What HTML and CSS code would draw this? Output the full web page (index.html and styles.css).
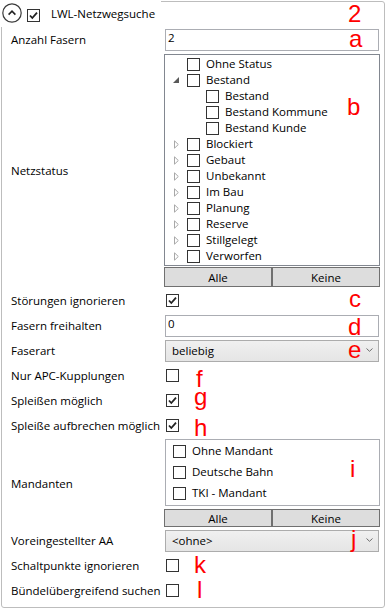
FILE: index.html
```html
<!DOCTYPE html>
<html lang="de">
<head>
    <meta charset="UTF-8">
    <meta name="viewport" content="width=device-width, initial-scale=1.0">
    <title>LWL-Netzwegsuche</title>
    <link rel="stylesheet" href="styles.css">
</head>
<body>
    <div class="panel">
        <div class="panel-header">
            <span class="expander">
                <svg width="20" height="20" viewBox="0 0 20 20"><circle cx="10" cy="10" r="9.2" fill="#fff" stroke="#3a3a3a" stroke-width="1.2"/><polyline points="6.6,11.6 10,8.2 13.4,11.6" fill="none" stroke="#222" stroke-width="1.6"/></svg>
            </span>
            <span class="check checked"><svg width="11" height="11" viewBox="0 0 11 11"><polyline points="2,5.5 4.3,8 9,2.6" fill="none" stroke="#222" stroke-width="1.8"/></svg></span>
            <span class="panel-title">LWL-Netzwegsuche</span>
        </div>

        <div class="field">
            <label class="field-label">Anzahl Fasern</label>
            <div class="field-value"><input class="textbox" type="text" value="2"></div>
        </div>

        <div class="field field-tree">
            <label class="field-label">Netzstatus</label>
            <div class="field-value stack">
                <ul class="tree">
                    <li class="tree-row"><span class="tree-toggle"></span><span class="check"></span><span class="tree-text">Ohne Status</span></li>
                    <li class="tree-row"><span class="tree-toggle"><svg width="6" height="6" viewBox="0 0 6 6"><path d="M6 0 L6 6 L0 6 Z" fill="#595959"/></svg></span><span class="check"></span><span class="tree-text">Bestand</span></li>
                    <li class="tree-row tree-child"><span class="tree-toggle"></span><span class="check"></span><span class="tree-text">Bestand</span></li>
                    <li class="tree-row tree-child"><span class="tree-toggle"></span><span class="check"></span><span class="tree-text">Bestand Kommune</span></li>
                    <li class="tree-row tree-child"><span class="tree-toggle"></span><span class="check"></span><span class="tree-text">Bestand Kunde</span></li>
                    <li class="tree-row"><span class="tree-toggle closed"><svg width="5" height="9" viewBox="0 0 5 9"><path d="M0.5 0.8 L4.3 4.5 L0.5 8.2 Z" fill="none" stroke="#a8a8a8"/></svg></span><span class="check"></span><span class="tree-text">Blockiert</span></li>
                    <li class="tree-row"><span class="tree-toggle closed"><svg width="5" height="9" viewBox="0 0 5 9"><path d="M0.5 0.8 L4.3 4.5 L0.5 8.2 Z" fill="none" stroke="#a8a8a8"/></svg></span><span class="check"></span><span class="tree-text">Gebaut</span></li>
                    <li class="tree-row"><span class="tree-toggle closed"><svg width="5" height="9" viewBox="0 0 5 9"><path d="M0.5 0.8 L4.3 4.5 L0.5 8.2 Z" fill="none" stroke="#a8a8a8"/></svg></span><span class="check"></span><span class="tree-text">Unbekannt</span></li>
                    <li class="tree-row"><span class="tree-toggle closed"><svg width="5" height="9" viewBox="0 0 5 9"><path d="M0.5 0.8 L4.3 4.5 L0.5 8.2 Z" fill="none" stroke="#a8a8a8"/></svg></span><span class="check"></span><span class="tree-text">Im Bau</span></li>
                    <li class="tree-row"><span class="tree-toggle closed"><svg width="5" height="9" viewBox="0 0 5 9"><path d="M0.5 0.8 L4.3 4.5 L0.5 8.2 Z" fill="none" stroke="#a8a8a8"/></svg></span><span class="check"></span><span class="tree-text">Planung</span></li>
                    <li class="tree-row"><span class="tree-toggle closed"><svg width="5" height="9" viewBox="0 0 5 9"><path d="M0.5 0.8 L4.3 4.5 L0.5 8.2 Z" fill="none" stroke="#a8a8a8"/></svg></span><span class="check"></span><span class="tree-text">Reserve</span></li>
                    <li class="tree-row"><span class="tree-toggle closed"><svg width="5" height="9" viewBox="0 0 5 9"><path d="M0.5 0.8 L4.3 4.5 L0.5 8.2 Z" fill="none" stroke="#a8a8a8"/></svg></span><span class="check"></span><span class="tree-text">Stillgelegt</span></li>
                    <li class="tree-row"><span class="tree-toggle closed"><svg width="5" height="9" viewBox="0 0 5 9"><path d="M0.5 0.8 L4.3 4.5 L0.5 8.2 Z" fill="none" stroke="#a8a8a8"/></svg></span><span class="check"></span><span class="tree-text">Verworfen</span></li>
                </ul>
                <div class="button-pair tree-buttons"><button>Alle</button><button>Keine</button></div>
            </div>
        </div>

        <div class="field">
            <label class="field-label">Störungen ignorieren</label>
            <div class="field-value"><span class="check checked"><svg width="11" height="11" viewBox="0 0 11 11"><polyline points="2,5.5 4.3,8 9,2.6" fill="none" stroke="#222" stroke-width="1.8"/></svg></span></div>
        </div>

        <div class="field">
            <label class="field-label">Fasern freihalten</label>
            <div class="field-value"><input class="textbox" type="text" value="0"></div>
        </div>

        <div class="field">
            <label class="field-label">Faserart</label>
            <div class="field-value">
                <div class="combo"><span>beliebig</span><svg width="7" height="4" viewBox="0 0 7 4"><polyline points="0.5,0.5 3.5,3.3 6.5,0.5" fill="none" stroke="#6d6d6d"/></svg></div>
            </div>
        </div>

        <div class="field">
            <label class="field-label">Nur APC-Kupplungen</label>
            <div class="field-value"><span class="check"></span></div>
        </div>

        <div class="field">
            <label class="field-label">Spleißen möglich</label>
            <div class="field-value"><span class="check checked"><svg width="11" height="11" viewBox="0 0 11 11"><polyline points="2,5.5 4.3,8 9,2.6" fill="none" stroke="#222" stroke-width="1.8"/></svg></span></div>
        </div>

        <div class="field">
            <label class="field-label">Spleiße aufbrechen möglich</label>
            <div class="field-value"><span class="check checked"><svg width="11" height="11" viewBox="0 0 11 11"><polyline points="2,5.5 4.3,8 9,2.6" fill="none" stroke="#222" stroke-width="1.8"/></svg></span></div>
        </div>

        <div class="field field-list">
            <label class="field-label">Mandanten</label>
            <div class="field-value stack">
                <ul class="listbox">
                    <li class="list-row"><span class="check"></span><span class="list-text">Ohne Mandant</span></li>
                    <li class="list-row"><span class="check"></span><span class="list-text">Deutsche Bahn</span></li>
                    <li class="list-row"><span class="check"></span><span class="list-text">TKI - Mandant</span></li>
                </ul>
                <div class="button-pair list-buttons"><button>Alle</button><button>Keine</button></div>
            </div>
        </div>

        <div class="field">
            <label class="field-label">Voreingestellter AA</label>
            <div class="field-value">
                <div class="combo"><span>&lt;ohne&gt;</span><svg width="7" height="4" viewBox="0 0 7 4"><polyline points="0.5,0.5 3.5,3.3 6.5,0.5" fill="none" stroke="#6d6d6d"/></svg></div>
            </div>
        </div>

        <div class="field">
            <label class="field-label">Schaltpunkte ignorieren</label>
            <div class="field-value"><span class="check"></span></div>
        </div>

        <div class="field">
            <label class="field-label">Bündelübergreifend suchen</label>
            <div class="field-value"><span class="check"></span></div>
        </div>

        <!-- red annotation letters -->
        <span class="mark mark-2">2</span>
        <span class="mark mark-a">a</span>
        <span class="mark mark-b">b</span>
        <span class="mark mark-c">c</span>
        <span class="mark mark-d">d</span>
        <span class="mark mark-e">e</span>
        <span class="mark mark-f">f</span>
        <span class="mark mark-g">g</span>
        <span class="mark mark-h">h</span>
        <span class="mark mark-i">i</span>
        <span class="mark mark-j">j</span>
        <span class="mark mark-k">k</span>
        <span class="mark mark-l">l</span>
    </div>
</body>
</html>
```

FILE: styles.css
```css
body {
    margin: 0;
    font-family: "Open Sans", "Segoe UI", sans-serif;
    font-size: 11.5px;
    color: #000;
    background: #fff;
}
.panel {
    position: relative;
    box-sizing: border-box;
    width: 384px;
    height: 607px;
    margin: 1px;
    padding: 0 4px 4px 9px;
    border: 1px solid #bdbdbd;
    border-radius: 3px;
}
.panel-header {
    display: flex;
    align-items: flex-start;
    width: fit-content;
    height: 26px;
    margin: -1px 0 0 -10px;
    padding: 0 6px 0 1px;
    background: #fff;
}
.expander {
    display: block;
    margin-top: 2px;
    height: 20px;
}
.panel-header .check {
    margin: 8px 0 0 5px;
}
.panel-title {
    margin: 5px 0 0 11px;
    line-height: 16px;
}

/* form rows */
.field {
    display: flex;
    align-items: center;
    height: 25px;
}
.field-label {
    flex: none;
    width: 153px;
}
.field-value {
    flex: 1;
    min-width: 0;
}
.field-value > .check {
    margin-left: 2px;
}
.stack {
    display: flex;
    flex-direction: column;
}
.field-tree {
    height: 236px;
}
.field-list {
    height: 90px;
}

/* checkbox */
.check {
    box-sizing: border-box;
    display: flex;
    align-items: center;
    justify-content: center;
    flex: none;
    width: 13px;
    height: 13px;
    border: 1px solid #333;
    background: #fff;
}

.textbox {
    display: block;
    box-sizing: border-box;
    width: 214px;
    height: 22px;
    margin: 0 0 0 1px;
    padding: 0 2px 5px;
    border: 1px solid #abadb3;
    font: inherit;
    color: #000;
    outline: none;
}

.combo {
    box-sizing: border-box;
    display: flex;
    align-items: center;
    justify-content: space-between;
    height: 22px;
    margin: 0 1px;
    padding: 0 5px 1px 6px;
    border: 1px solid #acacac;
    background: linear-gradient(#f0f0f0, #e5e5e5);
}

/* tree */
.tree {
    box-sizing: border-box;
    height: 212px;
    margin: 2px 0 0;
    padding: 1px;
    list-style: none;
    border: 1px solid #828790;
}
.tree-row {
    display: flex;
    align-items: center;
    height: 16px;
}
.tree-child {
    padding-left: 19px;
}
.tree-toggle {
    display: flex;
    align-items: center;
    justify-content: center;
    flex: none;
    width: 19px;
    height: 16px;
}
.tree-toggle.closed svg {
    margin-left: 2px;
}
.tree-row .check {
    margin-left: 2px;
}
.tree-text {
    margin: 0 0 2px 6px;
    white-space: nowrap;
}

/* Alle / Keine */
.button-pair {
    display: grid;
    grid-template-columns: 1fr 1fr;
}
.button-pair button {
    height: 100%;
    padding: 0;
    border: 1px solid #707070;
    background: #dddddd;
    font: inherit;
    color: #000;
}
.tree-buttons {
    height: 20px;
    margin: 1px 0 1px;
}
.list-buttons {
    height: 18px;
    margin: 3px 0 1px;
}

.listbox {
    box-sizing: border-box;
    height: 67px;
    margin: 1px 0 0 1px;
    padding: 1px 0 1px 7px;
    list-style: none;
    border: 1px solid #abadb3;
}
.list-row {
    display: flex;
    align-items: center;
    gap: 6px;
    height: 21px;
}
.list-text {
    margin-bottom: 2px;
}

/* annotation letters */
.mark {
    position: absolute;
    font-family: "Liberation Sans", Arial, sans-serif;
    font-size: 24px;
    line-height: 24px;
    color: #ff0000;
}
.mark-2 { left: 346px; top: 0; }
.mark-a { left: 347px; top: 25px; }
.mark-b { left: 345px; top: 93px; }
.mark-c { left: 347px; top: 285px; }
.mark-d { left: 346px; top: 313px; }
.mark-e { left: 346px; top: 336px; }
.mark-f { left: 194px; top: 365px; }
.mark-g { left: 192px; top: 383px; }
.mark-h { left: 192px; top: 414px; }
.mark-i { left: 348px; top: 455px; }
.mark-j { left: 349px; top: 525px; }
.mark-k { left: 192px; top: 551px; }
.mark-l { left: 195px; top: 576px; }
```
